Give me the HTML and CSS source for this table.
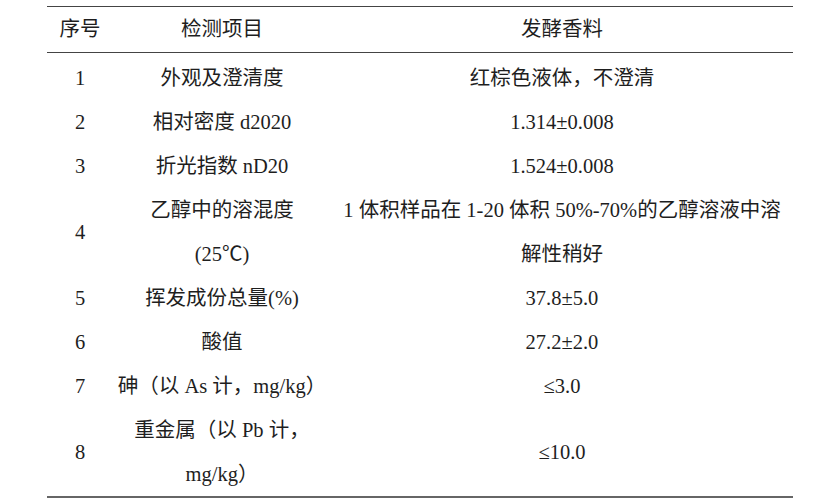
FILE: index.html
```html
<!DOCTYPE html>
<html lang="zh">
<head>
<meta charset="utf-8">
<link rel="stylesheet" href="styles.css">
</head>
<body>
<table class="spec">
  <colgroup>
    <col class="c-no">
    <col class="c-item">
    <col class="c-val">
  </colgroup>
  <thead>
    <tr><th>序号</th><th>检测项目</th><th>发酵香料</th></tr>
  </thead>
  <tbody>
    <tr class="first"><td>1</td><td>外观及澄清度</td><td>红棕色液体，不澄清</td></tr>
    <tr><td>2</td><td>相对密度 d2020</td><td>1.314±0.008</td></tr>
    <tr><td>3</td><td>折光指数 nD20</td><td>1.524±0.008</td></tr>
    <tr><td>4</td><td>乙醇中的溶混度<br>(25℃)</td><td>1 体积样品在 1-20 体积 50%-70%的乙醇溶液中溶<br>解性稍好</td></tr>
    <tr><td>5</td><td>挥发成份总量(%)</td><td>37.8±5.0</td></tr>
    <tr><td>6</td><td>酸值</td><td>27.2±2.0</td></tr>
    <tr><td>7</td><td>砷（以 As 计，mg/kg）</td><td>≤3.0</td></tr>
    <tr class="last"><td>8</td><td>重金属（以 Pb 计，<br>mg/kg）</td><td>≤10.0</td></tr>
  </tbody>
</table>
</body>
</html>
```

FILE: styles.css
```css
html, body {
  margin: 0;
  padding: 0;
  background: #ffffff;
}
body {
  padding-top: 6px;
  padding-left: 47px;
  font-family: "Liberation Serif", "Noto Sans CJK SC", serif;
  font-size: 20.5px;
  color: #1e1e1e;
}
.spec {
  border-collapse: collapse;
  table-layout: fixed;
  width: 746px;
  border-top: 1px solid #444444;
  border-bottom: 2px solid #666666;
}
.c-no { width: 66px; }
.c-item { width: 218px; }
.c-val { width: 462px; }
.spec th {
  font-weight: normal;
  height: 45px;
  line-height: 45px;
  padding: 0;
  text-align: center;
  border-bottom: 1px solid #444444;
}
.spec td {
  line-height: 44px;
  padding: 0 4px;
  text-align: center;
  vertical-align: middle;
  white-space: nowrap;
}
.spec tr.first td {
  padding-top: 3px;
}
```
